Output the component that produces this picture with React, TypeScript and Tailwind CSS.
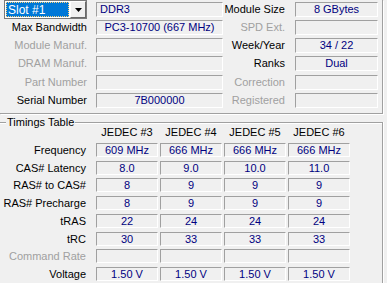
import React from "react";

const FONT = { fontFamily: '"Liberation Sans", Arial, sans-serif' };

function Box({ w, h, children, align = "center" }: { w: string; h: string; children?: React.ReactNode; align?: "center" | "left" }) {
  return (
    <div
      className={`${w} ${h} border-t border-l border-b border-r border-t-[#a0a0a0] border-l-[#a0a0a0] border-b-white border-r-white text-[#000080] flex items-center leading-none whitespace-nowrap ${
        align === "left" ? "justify-start pl-[3px]" : "justify-center"
      }`}
    >
      {children}
    </div>
  );
}

function TopRow({
  left,
  leftDisabled,
  leftVal,
  leftAlign,
  right,
  rightDisabled,
  rightVal,
  mt,
  combo,
}: {
  left?: string;
  leftDisabled?: boolean;
  leftVal?: string;
  leftAlign?: "center" | "left";
  right: string;
  rightDisabled?: boolean;
  rightVal?: string;
  mt: string;
  combo?: boolean;
}) {
  return (
    <div className={`flex h-[15px] items-center ${mt}`}>
      {combo ? (
        <div className="w-[96px] h-[15px] relative">
          <div className="absolute left-[4px] top-[-2px] w-[83px] h-[19px] border border-[#7a7a7a] bg-white flex">
            <div className="m-[1px] w-[63px] bg-[#0078d7] border border-dotted border-[#ffd27a] text-white text-[12px] flex items-center pl-[1px] leading-none">
              Slot #1
            </div>
            <div className="ml-auto w-[16px] h-[17px] bg-[#f0f0f0] border-t border-l border-t-white border-l-white border-b border-r border-b-[#696969] border-r-[#696969] flex items-center justify-center">
              <svg width="7" height="4" viewBox="0 0 7 4">
                <polygon points="0,0 7,0 3.5,4" fill="#000" />
              </svg>
            </div>
          </div>
        </div>
      ) : (
        <div
          className={`w-[96px] pr-[9px] text-right leading-none whitespace-nowrap ${
            leftDisabled ? "text-[#a0a0a0]" : "text-black"
          }`}
        >
          {left}
        </div>
      )}
      <Box w="w-[127px]" h="h-[15px]" align={leftAlign}>
        {leftVal}
      </Box>
      <div
        className={`w-[72px] pr-[10px] text-right leading-none whitespace-nowrap ${
          rightDisabled ? "text-[#a0a0a0]" : "text-black"
        }`}
      >
        {right}
      </div>
      <Box w="w-[83px]" h="h-[15px]">
        {rightVal}
      </Box>
    </div>
  );
}

function TRow({ label, vals, disabled, mt }: { label: string; vals: string[]; disabled?: boolean; mt: string }) {
  return (
    <div className={`flex h-[14px] items-center ${mt}`}>
      <div
        className={`w-[96px] pr-[10px] text-right leading-none whitespace-nowrap ${
          disabled ? "text-[#a0a0a0]" : "text-black"
        }`}
      >
        {label}
      </div>
      <div className="flex gap-[2px]">
        {[0, 1, 2, 3].map((i) => (
          <Box key={i} w="w-[62px]" h="h-[14px]">
            {vals[i]}
          </Box>
        ))}
      </div>
    </div>
  );
}

export default function App() {
  return (
    <div className="w-[387px] h-[283px] bg-[#f0f0f0] overflow-hidden text-[11px]" style={FONT}>
      {/* top group */}
      <div className="w-[383px] h-[114px] border-b border-r border-[#a0a0a0] shadow-[1px_1px_0_#ffffff] pt-[2px] flex flex-col">
        <TopRow combo leftVal="DDR3" leftAlign="left" right="Module Size" rightVal="8 GBytes" mt="mt-0" />
        <TopRow left="Max Bandwidth" leftVal="PC3-10700 (667 MHz)" right="SPD Ext." rightDisabled mt="mt-[3px]" />
        <TopRow left="Module Manuf." leftDisabled right="Week/Year" rightVal="34 / 22" mt="mt-[3px]" />
        <TopRow left="DRAM Manuf." leftDisabled right="Ranks" rightVal="Dual" mt="mt-[3px]" />
        <TopRow left="Part Number" leftDisabled right="Correction" rightDisabled mt="mt-[4px]" />
        <TopRow left="Serial Number" leftVal="7B000000" right="Registered" rightDisabled mt="mt-[3px]" />
      </div>

      {/* timings group */}
      <div className="relative mt-[8px] w-[383px] h-[200px] border-t border-r border-[#a0a0a0] shadow-[inset_0_1px_0_#ffffff,1px_0_0_#ffffff] pt-[1px]">
        <span className="absolute left-[6px] top-[-8px] px-[1px] bg-[#f0f0f0] text-black leading-[14px]">
          Timings Table
        </span>
        <div className="flex h-[14px] items-center mt-[1px]">
          <div className="w-[96px]" />
          <div className="flex gap-[2px]">
            {["JEDEC #3", "JEDEC #4", "JEDEC #5", "JEDEC #6"].map((t) => (
              <div key={t} className="w-[62px] text-center leading-none text-black whitespace-nowrap">
                {t}
              </div>
            ))}
          </div>
        </div>
        <TRow label="Frequency" vals={["609 MHz", "666 MHz", "666 MHz", "666 MHz"]} mt="mt-[4px]" />
        <TRow label="CAS# Latency" vals={["8.0", "9.0", "10.0", "11.0"]} mt="mt-[4px]" />
        <TRow label="RAS# to CAS#" vals={["8", "9", "9", "9"]} mt="mt-[3px]" />
        <TRow label="RAS# Precharge" vals={["8", "9", "9", "9"]} mt="mt-[4px]" />
        <TRow label="tRAS" vals={["22", "24", "24", "24"]} mt="mt-[4px]" />
        <TRow label="tRC" vals={["30", "33", "33", "33"]} mt="mt-[4px]" />
        <TRow label="Command Rate" disabled vals={["", "", "", ""]} mt="mt-[3px]" />
        <TRow label="Voltage" vals={["1.50 V", "1.50 V", "1.50 V", "1.50 V"]} mt="mt-[4px]" />
      </div>
    </div>
  );
}
